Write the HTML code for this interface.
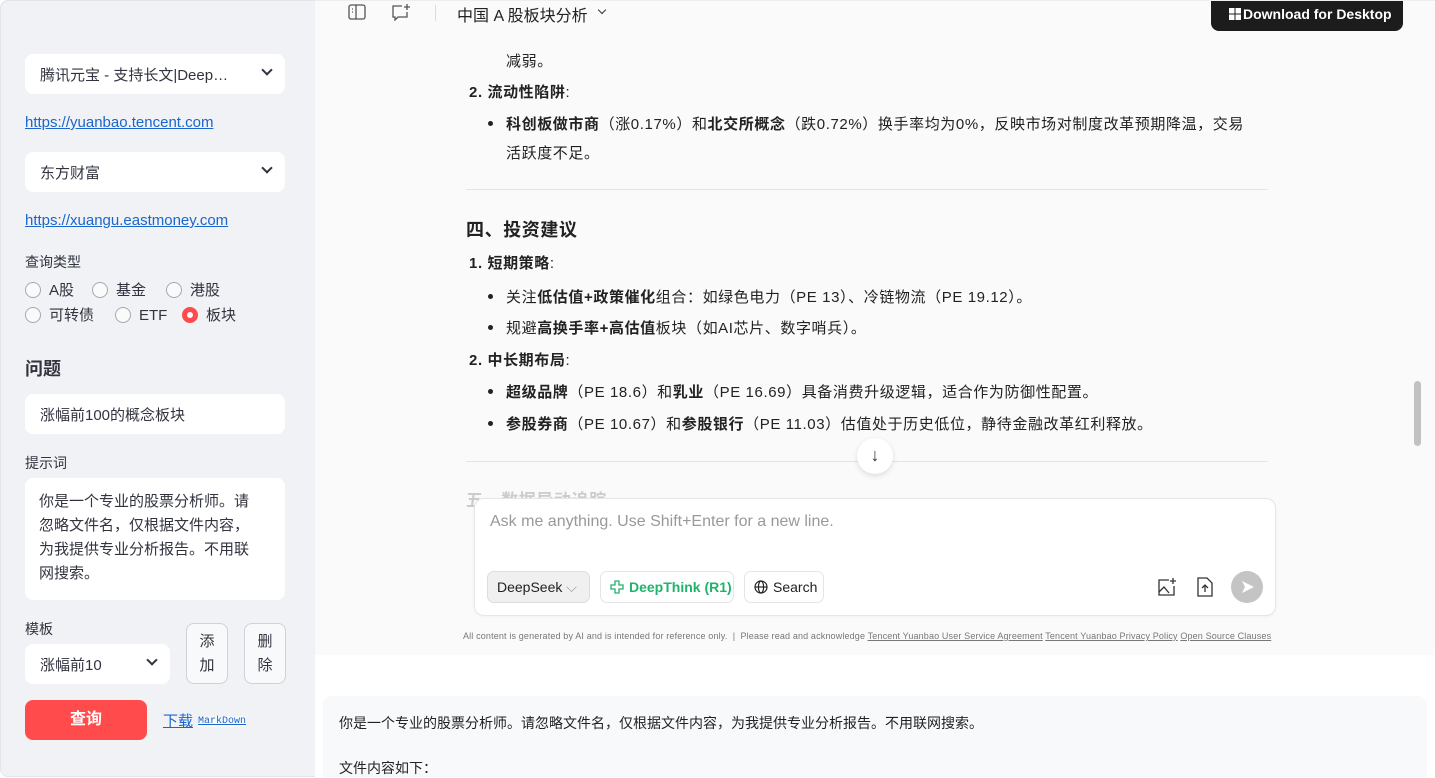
<!DOCTYPE html>
<html><head><meta charset="utf-8"><style>
*{box-sizing:border-box;margin:0;padding:0}
body{width:1435px;height:777px;overflow:hidden;background:#fff;font-family:"Liberation Sans","Noto Sans CJK SC",sans-serif;position:relative;color:#31333f}
.side{position:absolute;left:0;top:0;width:315px;height:777px;background:#f0f2f6;border-radius:8px 0 0 8px;box-shadow:inset 1px 1px 0 #e3e5ea,inset 0 -1px 0 #e3e5ea}
.a{position:absolute}
.sel{position:absolute;left:25px;width:260px;height:40px;background:#fff;border-radius:8px;font-size:15px;padding:10px 15px;color:#31333f}
.sel .chev{position:absolute;right:14px;top:12px;width:8px;height:8px;border-right:2px solid #31333f;border-bottom:2px solid #31333f;transform:rotate(45deg)}
.link{position:absolute;left:25px;font-size:15px;color:#1a66cc;text-decoration:underline}
.lbl{position:absolute;left:25px;font-size:14px;color:#31333f}
.rad{position:absolute;font-size:15px;line-height:18px}
.rad i{display:inline-block;width:16px;height:16px;border:1px solid #a3a8b4;border-radius:50%;background:#fafafa;vertical-align:-3px;margin-right:8px}
.rad i.on{border:5px solid #ff4b4b;background:#fff}
.main{position:absolute;left:315px;top:0;width:1120px;height:655px;background:#fafafa;border-top:1px solid #eee}
.t{position:absolute;font-size:15px;color:#222;white-space:nowrap;letter-spacing:0.6px}
.t b{font-weight:bold}
.bul{position:absolute;left:488px;width:5px;height:5px;background:#222;border-radius:50%}
.hr{position:absolute;left:466px;width:802px;height:1px;background:#e5e5e5}
</style></head><body>
<div class="side">
<div class="sel" style="top:54px">腾讯元宝 - 支持长文|Deep…<span class="chev"></span></div>
<div class="link" style="top:114px">https://yuanbao.tencent.com</div>
<div class="sel" style="top:152px">东方财富<span class="chev"></span></div>
<div class="link" style="top:212px">https://xuangu.eastmoney.com</div>
<div class="lbl" style="top:252px">查询类型</div>
<div class="rad" style="left:25px;top:282px"><i></i>A股</div>
<div class="rad" style="left:92px;top:282px"><i></i>基金</div>
<div class="rad" style="left:166px;top:282px"><i></i>港股</div>
<div class="rad" style="left:25px;top:307px"><i></i>可转债</div>
<div class="rad" style="left:115px;top:307px"><i></i>ETF</div>
<div class="rad" style="left:182px;top:307px"><i class="on"></i>板块</div>
<div class="a" style="left:25px;top:355px;font-size:18px;font-weight:bold">问题</div>
<div class="sel" style="top:394px">涨幅前100的概念板块</div>
<div class="lbl" style="top:453px">提示词</div>
<div class="a" style="left:25px;top:478px;width:260px;height:122px;background:#fff;border-radius:8px;padding:12px 24px 12px 14px;font-size:15px;line-height:24px">你是一个专业的股票分析师。请忽略文件名，仅根据文件内容，为我提供专业分析报告。不用联网搜索。</div>
<div class="lbl" style="top:619px">模板</div>
<div class="sel" style="top:644px;width:145px">涨幅前10<span class="chev"></span></div>
<div class="a" style="left:186px;top:623px;width:42px;height:61px;border:1px solid #d0d2d8;border-radius:8px;background:#f8f9fb;font-size:15px;text-align:center;line-height:24px;padding-top:6px">添<br>加</div>
<div class="a" style="left:244px;top:623px;width:42px;height:61px;border:1px solid #d0d2d8;border-radius:8px;background:#f8f9fb;font-size:15px;text-align:center;line-height:24px;padding-top:6px">删<br>除</div>
<div class="a" style="left:25px;top:700px;width:122px;height:40px;background:#ff4b4b;border-radius:8px;color:#fff;font-size:16px;font-weight:bold;text-align:center;line-height:40px">查询</div>
<div class="a" style="left:163px;top:710px;font-size:15px;color:#1a66cc;text-decoration:underline">下载</div>
<div class="a" style="left:198px;top:716px;font-size:10px;font-family:'Liberation Mono',monospace;color:#1a66cc;text-decoration:underline;background:#f8f9fb">MarkDown</div>
</div>

<div class="main">
<svg class="a" style="left:33px;top:3px" width="18" height="16" viewBox="0 0 18 16" fill="none" stroke="#555" stroke-width="1.3"><rect x="1" y="1" width="16" height="14" rx="2"/><line x1="8" y1="1" x2="8" y2="15"/><line x1="4" y1="5" x2="5" y2="5"/><line x1="4" y1="8" x2="5" y2="8"/></svg>
<svg class="a" style="left:76px;top:2px" width="20" height="18" viewBox="0 0 20 18" fill="none" stroke="#555" stroke-width="1.3"><path d="M11 3H2v11h2v3l3-3h9V9"/><path d="M16 1v6M13 4h6"/></svg>
<div class="a" style="left:120px;top:4px;width:1px;height:16px;background:#ddd"></div>
<div class="a" style="left:142px;top:1px;font-size:16px;color:#222">中国 A 股板块分析</div>
<div class="a" style="left:284px;top:6px;width:6px;height:6px;border-right:1.5px solid #333;border-bottom:1.5px solid #333;transform:rotate(45deg)"></div>
<div class="a" style="left:896px;top:0;width:192px;height:30px;background:#1c1c1c;border-radius:0 0 8px 8px;color:#fff;font-size:14px;font-weight:bold;line-height:26px;padding-left:32px;white-space:nowrap">Download for Desktop</div>
<svg class="a" style="left:914px;top:7px" width="12" height="12" viewBox="0 0 12 12" fill="#fff"><rect x="0" y="0" width="5.5" height="5.5"/><rect x="6.5" y="0" width="5.5" height="5.5"/><rect x="0" y="6.5" width="5.5" height="5.5"/><rect x="6.5" y="6.5" width="5.5" height="5.5"/></svg>
<div class="a" style="left:1099px;top:380px;width:7px;height:65px;background:#c1c1c1;border-radius:4px"></div>
</div>

<div class="t" style="left:506px;top:50px">减弱。</div>
<div class="t" style="left:469px;top:81px"><b>2. 流动性陷阱</b>:</div>
<div class="bul" style="top:121px"></div>
<div class="t" style="left:506px;top:113px"><b>科创板做市商</b>（涨0.17%）和<b>北交所概念</b>（跌0.72%）换手率均为0%，反映市场对制度改革预期降温，交易</div>
<div class="t" style="left:506px;top:142px">活跃度不足。</div>
<div class="hr" style="top:189px"></div>
<div class="t" style="left:466px;top:216px;font-size:18px"><b>四、投资建议</b></div>
<div class="t" style="left:469px;top:252px"><b>1. 短期策略</b>:</div>
<div class="bul" style="top:294px"></div>
<div class="t" style="left:506px;top:286px">关注<b>低估值+政策催化</b>组合：如绿色电力（PE 13）、冷链物流（PE 19.12）。</div>
<div class="bul" style="top:325px"></div>
<div class="t" style="left:506px;top:317px">规避<b>高换手率+高估值</b>板块（如AI芯片、数字哨兵）。</div>
<div class="t" style="left:469px;top:349px"><b>2. 中长期布局</b>:</div>
<div class="bul" style="top:389px"></div>
<div class="t" style="left:506px;top:381px"><b>超级品牌</b>（PE 18.6）和<b>乳业</b>（PE 16.69）具备消费升级逻辑，适合作为防御性配置。</div>
<div class="bul" style="top:421px"></div>
<div class="t" style="left:506px;top:413px"><b>参股券商</b>（PE 10.67）和<b>参股银行</b>（PE 11.03）估值处于历史低位，静待金融改革红利释放。</div>
<div class="hr" style="top:461px"></div>
<div class="t" style="left:466px;top:486px;font-size:17px;color:#ccc"><b>五、数据异动追踪</b></div>
<div class="a" style="left:857px;top:438px;width:36px;height:36px;border-radius:50%;background:#fff;box-shadow:0 2px 6px rgba(0,0,0,.12);text-align:center;font-size:18px;line-height:34px;color:#333">↓</div>

<div class="a" style="left:474px;top:498px;width:802px;height:118px;background:#fff;border:1px solid #e6e6e6;border-radius:10px;box-shadow:0 1px 3px rgba(0,0,0,.04)">
<div class="a" style="left:15px;top:14px;font-size:16px;color:#999">Ask me anything. Use Shift+Enter for a new line.</div>
<div class="a" style="left:12px;top:72px;width:103px;height:32px;background:#f0f0f0;border:1px solid #ddd;border-radius:7px;font-size:14px;line-height:30px;padding-left:9px;color:#222">DeepSeek <span style="color:#999">⌵</span></div>
<div class="a" style="left:125px;top:72px;width:134px;height:32px;border:1px solid #e4e4e4;border-radius:7px;font-size:14px;line-height:30px;padding-left:28px;color:#1fb36b;font-weight:bold">DeepThink (R1)</div>
<svg class="a" style="left:135px;top:81px" width="14" height="14" viewBox="0 0 14 14" fill="none" stroke="#1fb36b" stroke-width="1.3"><path d="M5 1h4v4h4v4H9v4H5V9H1V5h4z"/></svg>
<div class="a" style="left:269px;top:72px;width:80px;height:32px;border:1px solid #e4e4e4;border-radius:7px;font-size:14px;line-height:30px;padding-left:28px;color:#222">Search</div>
<svg class="a" style="left:279px;top:81px" width="14" height="14" viewBox="0 0 14 14" fill="none" stroke="#222" stroke-width="1.2"><circle cx="7" cy="7" r="6"/><ellipse cx="7" cy="7" rx="2.6" ry="6"/><line x1="1" y1="7" x2="13" y2="7"/></svg>
<svg class="a" style="left:682px;top:78px" width="20" height="20" viewBox="0 0 20 20" fill="none" stroke="#333" stroke-width="1.3"><path d="M12 3H2v15h15V9"/><path d="M2 15l5-5 5 6"/><path d="M16 1v6M13 4h6"/></svg>
<svg class="a" style="left:721px;top:78px" width="18" height="20" viewBox="0 0 18 20" fill="none" stroke="#333" stroke-width="1.3"><path d="M2 1h9l5 5v13H2z"/><path d="M9 15V8M6 11l3-3 3 3"/></svg>
<div class="a" style="left:756px;top:72px;width:32px;height:32px;border-radius:50%;background:#c4c4c4"></div>
<svg class="a" style="left:764px;top:80px" width="16" height="16" viewBox="0 0 16 16"><path d="M3 2l12 6-12 6 3-6z" fill="#fff"/></svg>
</div>
<div class="a" style="left:463px;top:631px;font-size:9px;color:#777;white-space:nowrap;letter-spacing:0.15px">All content is generated by AI and is intended for reference only. &nbsp;| &nbsp;Please read and acknowledge <u>Tencent Yuanbao User Service Agreement</u> <u>Tencent Yuanbao Privacy Policy</u> <u>Open Source Clauses</u></div>

<div class="a" style="left:323px;top:696px;width:1104px;height:81px;background:#f8f9fb;border-radius:8px 8px 0 0">
<div class="a" style="left:16px;top:17px;font-size:14px;color:#222">你是一个专业的股票分析师。请忽略文件名，仅根据文件内容，为我提供专业分析报告。不用联网搜索。</div>
<div class="a" style="left:16px;top:62px;font-size:14px;color:#222">文件内容如下：</div>
</div>
</body></html>
